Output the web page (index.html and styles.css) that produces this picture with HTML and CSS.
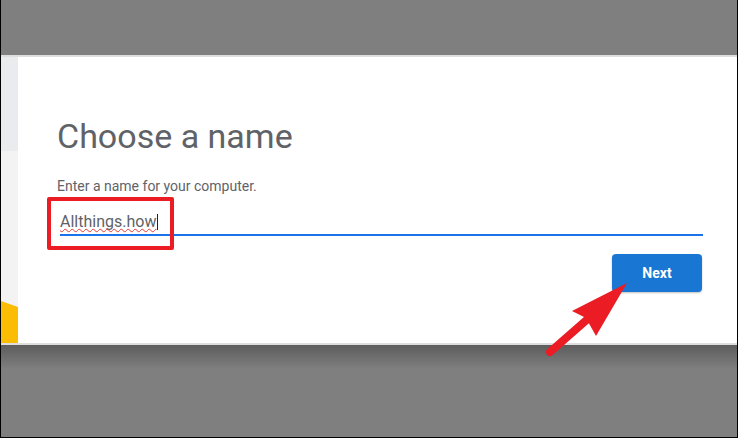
FILE: index.html
```html
<!DOCTYPE html>
<html lang="en">
<head>
<meta charset="utf-8">
<title>Choose a name</title>
<link rel="stylesheet" href="styles.css">
</head>
<body>
<div class="frame">
  <div class="top-shade"></div>
  <div class="edge-line"></div>
  <div class="main">
    <div class="side-strip">
      <div class="strip-accent"></div>
    </div>
    <div class="panel">
      <h1 class="title">Choose a name</h1>
      <p class="subtitle">Enter a name for your computer.</p>
      <div class="field">
        <span class="field-value">Allthings.how</span><span class="caret"></span>
        <div class="highlight-box"></div>
      </div>
      <div class="actions">
        <button class="next-btn" type="button">Next</button>
      </div>
    </div>
    <svg class="pointer-arrow" width="120" height="100" viewBox="530 270 120 100" xmlns="http://www.w3.org/2000/svg">
      <line x1="550" y1="352" x2="590" y2="317" stroke="#ec1c24" stroke-width="8" stroke-linecap="round"/>
      <polygon points="627,283 572,311 586,318 596,336" fill="#ec1c24"/>
    </svg>
  </div>
  <div class="edge-line"></div>
  <div class="bottom-shade"></div>
</div>
</body>
</html>
```
FILE: styles.css
```css
html, body {
  margin: 0;
  padding: 0;
}
body {
  width: 738px;
  height: 438px;
  overflow: hidden;
  background: #7f7f7f;
  font-family: Roboto, "Liberation Sans", Arial, sans-serif;
}
.frame {
  width: 738px;
  height: 438px;
  box-sizing: border-box;
  border-left: 1px solid #000;
  border-right: 1px solid #000;
  border-bottom: 1px solid #000;
  display: flex;
  flex-direction: column;
  background: #7f7f7f;
}
.top-shade {
  height: 55px;
  background: #7f7f7f;
}
.edge-line {
  height: 2px;
  background: #dedede;
}
.main {
  height: 286px;
  display: flex;
  position: relative;
  background: #fff;
}
.side-strip {
  width: 17px;
  display: flex;
  flex-direction: column;
  background: linear-gradient(to bottom, #e9ebee 94px, #f3f3f3 94px);
}
.strip-accent {
  margin-top: auto;
  height: 42px;
  background: #fbbc04;
  clip-path: polygon(0 0, 100% 6px, 100% 100%, 0 100%);
}
.panel {
  flex: 1;
  display: flex;
  flex-direction: column;
  padding: 59px 34px 0 39px;
  background: #fff;
}
.title {
  margin: 0;
  font-size: 34px;
  line-height: 40px;
  font-weight: 400;
  color: #5f6368;
}
.subtitle {
  margin: 21px 0 0;
  font-size: 14px;
  line-height: 18px;
  color: #5f6368;
}
.field {
  position: relative;
  margin: 17px 0 0 3px;
  height: 20px;
  padding-bottom: 2px;
  border-bottom: 2px solid #1a73e8;
  display: flex;
  align-items: center;
  font-size: 16px;
  line-height: 20px;
  color: #5f6368;
}
.field-value {
  text-decoration: underline wavy #e53935;
  text-decoration-thickness: 1px;
  text-underline-offset: 1px;
  text-decoration-skip-ink: none;
}
.caret {
  width: 1px;
  height: 16px;
  background: #202124;
  margin-left: 1px;
}
.highlight-box {
  position: absolute;
  left: -13px;
  top: -15px;
  width: 119px;
  height: 45px;
  border: 4px solid #ec1c24;
  border-radius: 2px;
}
.actions {
  display: flex;
  justify-content: flex-end;
  margin-top: 18px;
}
.next-btn {
  width: 90px;
  height: 38px;
  margin-right: 1px;
  border: none;
  border-radius: 4px;
  background: #1976d2;
  color: #fff;
  font-family: Roboto, "Liberation Sans", Arial, sans-serif;
  font-size: 14px;
  font-weight: 700;
  box-shadow: 0 1px 2px rgba(0,0,0,0.25);
}
.pointer-arrow {
  position: absolute;
  left: 529px;
  top: 213px;
  overflow: visible;
  z-index: 2;
}
.bottom-shade {
  flex: 1;
  background: linear-gradient(to bottom, #5d5d5d 0px, #7f7f7f 24px, #7f7f7f 100%);
}
```
